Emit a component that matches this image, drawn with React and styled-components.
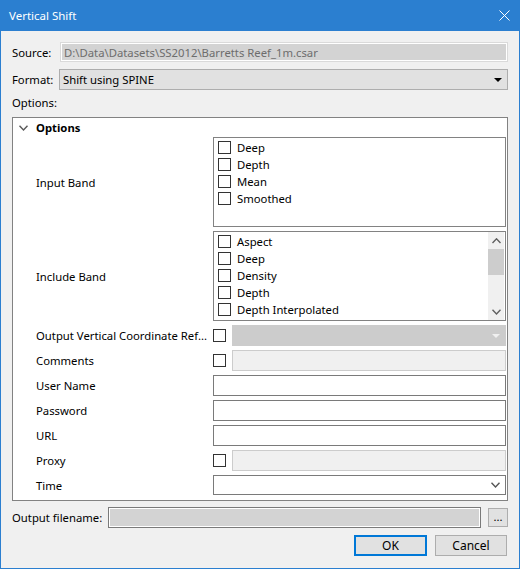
import React from 'react';
import styled, { createGlobalStyle } from 'styled-components';

const GlobalStyle = createGlobalStyle`
  html, body {
    margin: 0;
    padding: 0;
    background: #f0f0f0;
  }
  body {
    font-family: "Noto Sans", "Open Sans", sans-serif;
    font-size: 11.3px;
    color: #000;
  }
`;

const Window = styled.div`
  width: 520px;
  height: 569px;
  box-sizing: border-box;
  border: 1px solid #2b7fd0;
  border-top: none;
  background: #f0f0f0;
  display: flex;
  flex-direction: column;
`;

const TitleBar = styled.div`
  height: 31px;
  margin: 0 -1px;
  padding: 0 10px 0 9px;
  background: #2b7fd0;
  color: #fff;
  display: flex;
  align-items: center;
  justify-content: space-between;
  font-size: 11.5px;
`;

const Body = styled.div`
  padding: 11px 11px 0;
  display: flex;
  flex-direction: column;
`;

const FieldRow = styled.div`
  display: flex;
  align-items: center;
  height: ${p => p.h || 21}px;
  margin-top: ${p => p.mt || 0}px;
`;

const Label = styled.div`
  width: ${p => p.w}px;
  flex: none;
  white-space: nowrap;
`;

const ReadOnlyField = styled.div`
  flex: 1;
  height: 100%;
  box-sizing: border-box;
  border: 1px solid ${p => p.dark ? '#7a7a7a' : '#dadada'};
  box-shadow: inset 0 0 0 1px #fff;
  background: #d3d3d3;
  color: #6d6d6d;
  padding-left: 3px;
  display: flex;
  align-items: center;
  white-space: nowrap;
  overflow: hidden;
`;

const Combo = styled.div`
  flex: 1;
  height: 100%;
  box-sizing: border-box;
  border: 1px solid ${p => p.disabled ? '#cccccc' : p.white ? '#7a7a7a' : '#adadad'};
  background: ${p => p.disabled ? '#cccccc' : p.white ? '#fff' : '#e1e1e1'};
  display: flex;
  align-items: center;
  gap: 4px;
  padding: 0 5px 0 3px;
`;

const ComboText = styled.span`
  flex: 1;
  white-space: nowrap;
`;

const ComboArrow = styled.div`
  margin-left: auto;
  display: flex;
  align-items: center;
`;

const Triangle = styled.div`
  width: 0;
  height: 0;
  border-left: 4px solid transparent;
  border-right: 4px solid transparent;
  border-top: 4px solid ${p => p.light ? '#f0f0f0' : '#000'};
`;

const SectionLabel = styled.div`
  height: 16px;
  line-height: 16px;
  margin-top: 5px;
`;

const Panel = styled.div`
  margin-top: 6px;
  height: 384px;
  box-sizing: border-box;
  border: 1px solid #828282;
  background: #fff;
  display: flex;
  flex-direction: column;
`;

const PanelHeader = styled.div`
  height: 19px;
  display: flex;
  align-items: center;
  padding-left: 6px;
  font-weight: bold;
  gap: 8px;
`;

const PropGrid = styled.div`
  display: grid;
  grid-template-columns: 177px 1fr;
  row-gap: 4px;
  padding: 0 1px 0 23px;
`;

const PropLabel = styled.div`
  display: flex;
  align-items: center;
  white-space: nowrap;
`;

const Control = styled.div`
  display: flex;
  align-items: center;
  gap: 6px;
  height: ${p => p.h || 21}px;
`;

const ListBox = styled.div`
  flex: 1;
  height: 100%;
  box-sizing: border-box;
  border: 1px solid #828282;
  background: #fff;
  display: flex;
  overflow: hidden;
`;

const ListItems = styled.div`
  flex: 1;
  padding: 1px 0 0 4px;
`;

const ListItem = styled.div`
  height: 17px;
  display: flex;
  align-items: center;
  gap: 6px;
`;

const Check = styled.div`
  width: 13px;
  height: 13px;
  flex: none;
  box-sizing: border-box;
  border: 1px solid #333;
  background: #fff;
`;

const ScrollBar = styled.div`
  width: 16px;
  margin: 0 1px 0 0;
  background: #f0f0f0;
  display: flex;
  flex-direction: column;
  align-items: center;
`;

const ScrollArrow = styled.div`
  height: 17px;
  width: 100%;
  display: flex;
  align-items: center;
  justify-content: center;
`;

const ScrollThumb = styled.div`
  height: 26px;
  width: 100%;
  background: #cdcdcd;
`;

const TextBox = styled.div`
  flex: 1;
  height: 100%;
  box-sizing: border-box;
  border: 1px solid ${p => p.disabled ? '#cccccc' : '#7a7a7a'};
  background: ${p => p.disabled ? '#f0f0f0' : '#fff'};
`;

const SmallButton = styled.div`
  width: 20px;
  height: 19px;
  margin-left: 7px;
  box-sizing: border-box;
  border: 1px solid #adadad;
  background: #e1e1e1;
  display: flex;
  align-items: center;
  justify-content: center;
  line-height: 1;
  padding-bottom: 2px;
`;

const ButtonRow = styled.div`
  display: flex;
  justify-content: flex-end;
  gap: 8px;
  margin-top: 7px;
  padding-right: 1px;
`;

const Button = styled.div`
  width: ${p => p.w}px;
  height: 21px;
  box-sizing: border-box;
  border: ${p => p.primary ? '2px solid #0078d7' : '1px solid #adadad'};
  background: #e1e1e1;
  display: flex;
  align-items: center;
  justify-content: center;
  font-size: 12px;
`;

const Spacer = styled.div`
  flex: 1;
`;

const Chevron = ({ up, color = '#606060', w = 9, h = 5 }) => (
  <svg width={w} height={h + 1} viewBox={`0 0 ${w} ${h + 1}`}>
    <polyline
      points={up ? `0.5,${h} ${w / 2},0.8 ${w - 0.5},${h}` : `0.5,0.8 ${w / 2},${h} ${w - 0.5},0.8`}
      fill="none"
      stroke={color}
      strokeWidth="1.4"
    />
  </svg>
);

const CloseIcon = () => (
  <svg width="11" height="11" viewBox="0 0 11 11">
    <path d="M0.5 0.5 L10.5 10.5 M10.5 0.5 L0.5 10.5" stroke="#fff" strokeWidth="1" />
  </svg>
);

const inputBands = ['Deep', 'Depth', 'Mean', 'Smoothed'];
// only the rows visible in the scrolled list
const includeBands = ['Aspect', 'Deep', 'Density', 'Depth', 'Depth Interpolated'];

const CheckList = ({ items, scroll }) => (
  <ListBox>
    <ListItems>
      {items.map(name => (
        <ListItem key={name}>
          <Check />
          <span>{name}</span>
        </ListItem>
      ))}
    </ListItems>
    {scroll && (
      <ScrollBar>
        <ScrollArrow><Chevron up /></ScrollArrow>
        <ScrollThumb />
        <Spacer />
        <ScrollArrow><Chevron /></ScrollArrow>
      </ScrollBar>
    )}
  </ListBox>
);

export default function App() {
  return (
    <>
      <GlobalStyle />
      <Window>
        <TitleBar>
          <span>Vertical Shift</span>
          <CloseIcon />
        </TitleBar>
        <Body>
          <FieldRow h={20}>
            <Label w={48}>Source:</Label>
            <ReadOnlyField>D:\Data\Datasets\SS2012\Barretts Reef_1m.csar</ReadOnlyField>
          </FieldRow>
          <FieldRow mt={7}>
            <Label w={47}>Format:</Label>
            <Combo>
              <ComboText>Shift using SPINE</ComboText>
              <ComboArrow><Triangle /></ComboArrow>
            </Combo>
          </FieldRow>
          <SectionLabel>Options:</SectionLabel>
          <Panel>
            <PanelHeader>
              <Chevron color="#595959" w={9} h={5} />
              <span>Options</span>
            </PanelHeader>
            <PropGrid>
              <PropLabel>Input Band</PropLabel>
              <Control h={90}><CheckList items={inputBands} /></Control>

              <PropLabel>Include Band</PropLabel>
              <Control h={90}><CheckList items={includeBands} scroll /></Control>

              <PropLabel>Output Vertical Coordinate Ref...</PropLabel>
              <Control>
                <Check />
                <Combo disabled>
                  <ComboArrow><Triangle light /></ComboArrow>
                </Combo>
              </Control>

              <PropLabel>Comments</PropLabel>
              <Control><Check /><TextBox disabled /></Control>

              <PropLabel>User Name</PropLabel>
              <Control><TextBox /></Control>

              <PropLabel>Password</PropLabel>
              <Control><TextBox /></Control>

              <PropLabel>URL</PropLabel>
              <Control><TextBox /></Control>

              <PropLabel>Proxy</PropLabel>
              <Control><Check /><TextBox disabled /></Control>

              <PropLabel>Time</PropLabel>
              <Control h={20}>
                <Combo white>
                  <ComboArrow><Chevron color="#555" w={9} h={5} /></ComboArrow>
                </Combo>
              </Control>
            </PropGrid>
          </Panel>
          <FieldRow mt={6}>
            <Label w={96}>Output filename:</Label>
            <ReadOnlyField dark />
            <SmallButton>...</SmallButton>
          </FieldRow>
          <ButtonRow>
            <Button w={73} primary>OK</Button>
            <Button w={72}>Cancel</Button>
          </ButtonRow>
        </Body>
      </Window>
    </>
  );
}
